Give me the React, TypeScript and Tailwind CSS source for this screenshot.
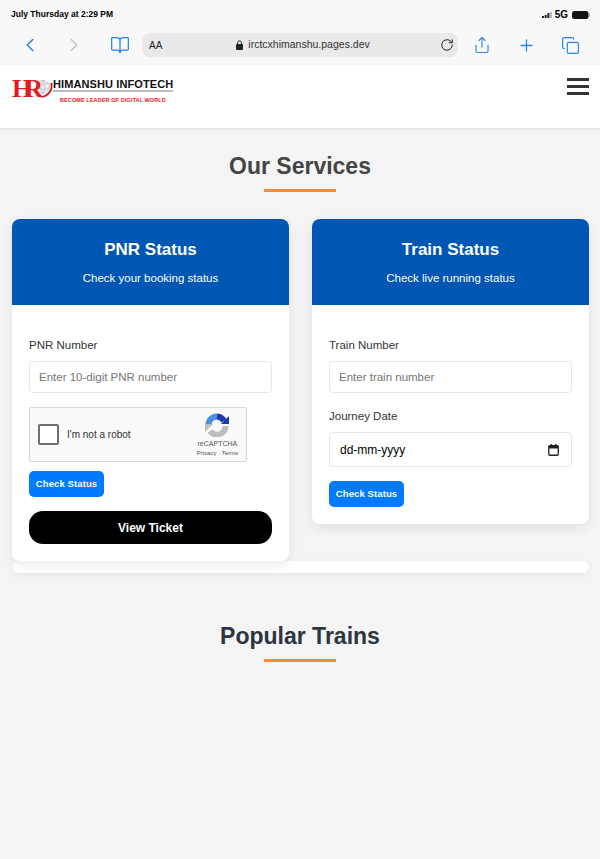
import { ChevronLeft, ChevronRight, BookOpen, RotateCw, Share, Plus, Copy } from "lucide-react"

const font = { fontFamily: '"Liberation Sans", Arial, sans-serif' }

function BrowserBar() {
  return (
    <div className="h-[65px] bg-[#f8f8f8] pl-[11px] pr-[10px] shrink-0">
      <div className="h-[29px] flex items-center justify-between">
        <span className="text-[8.5px] font-bold text-black">July Thursday at 2:29 PM</span>
        <div className="flex items-center gap-[3px]">
          <svg width="10" height="6" viewBox="0 0 10 6" fill="#222">
            <rect x="0" y="4" width="2" height="2" />
            <rect x="2.7" y="3" width="2" height="3" />
            <rect x="5.4" y="1" width="2" height="5" />
            <rect x="8" y="0" width="2" height="6" fill="#bbb" />
          </svg>
          <span className="text-[10px] font-bold text-black">5G</span>
          <svg width="18" height="8" viewBox="0 0 18 8" className="ml-[1px]">
            <rect x="0" y="0" width="16.5" height="8" rx="2.5" fill="#111" />
            <rect x="16.5" y="2.5" width="1.5" height="3" rx="0.7" fill="#999" />
          </svg>
        </div>
      </div>
      <div className="h-[26px] mt-[3px] flex items-center">
        <ChevronLeft size={22} strokeWidth={1.7} className="text-[#2a84f0] ml-[8px]" />
        <ChevronRight size={22} strokeWidth={1.7} className="text-[#c4c4c4] ml-[22px]" />
        <BookOpen size={20} strokeWidth={1.5} className="text-[#2a84f0] ml-[25px]" />
        <div className="ml-[12px] w-[316px] h-[24px] rounded-[8px] bg-[#e9e9e9] flex items-center pl-[7px] pr-[4px] text-[#222]">
          <span className="text-[10px]">AA</span>
          <svg width="7" height="10" viewBox="0 0 7 10" fill="none" className="ml-[74px]">
            <path d="M1.6 4.5 V2.8 A1.9 1.9 0 0 1 5.4 2.8 V4.5" stroke="#222" strokeWidth="1" />
            <rect x="0" y="4" width="7" height="6" rx="1" fill="#222" />
          </svg>
          <span className="text-[10.5px] ml-[5px] text-[#333] flex-1">irctcxhimanshu.pages.dev</span>
          <RotateCw size={14} strokeWidth={1.7} />
        </div>
        <Share size={18} strokeWidth={1.5} className="text-[#2a84f0] ml-[15px]" />
        <Plus size={19} strokeWidth={1.6} className="text-[#2a84f0] ml-[26px]" />
        <Copy size={19} strokeWidth={1.5} className="text-[#2a84f0] ml-[25px]" />
      </div>
    </div>
  )
}

function Logo() {
  return (
    <div className="flex items-start">
      <div className="relative w-[40px] h-[24px]">
        <svg width="22" height="22" viewBox="0 0 22 22" className="absolute left-[19px] top-[0px]" fill="none">
          <circle cx="12" cy="10" r="6.5" fill="#eee" stroke="#bdbdbd" strokeWidth="0.8" />
          <path d="M6 6 Q12 9 18 6 M5.5 11 Q12 14 18.5 11 M12 3 Q8 10 12 17 M12 3 Q16 10 12 17" stroke="#bdbdbd" strokeWidth="0.7" />
          <path d="M6 18 Q14 23 20 13 Q21 10 20.5 6" stroke="#d8141c" strokeWidth="1.8" />
        </svg>
        <span className="absolute left-[0px] top-[-1px] text-[26px] leading-[26px] font-bold text-[#e01b22] tracking-[-8px]" style={{ fontFamily: '"Liberation Serif", serif' }}>HR</span>
      </div>
      <div className="ml-[1px] pt-[1px]">
        <div className="text-[11px] leading-[12px] font-bold text-[#111] tracking-[0.1px] whitespace-nowrap">HIMANSHU INFOTECH</div>
        <div className="h-[2px] bg-[#bdbdbd] mt-[0px]" />
        <div className="text-[5.5px] leading-[8px] mt-[4px] ml-[7px] font-bold text-[#e8141c] whitespace-nowrap tracking-[0.1px]">BECOME LEADER OF DIGITAL WORLD</div>
      </div>
    </div>
  )
}

function Heading({ children, color }: { children: string; color: string }) {
  return (
    <div className="flex flex-col items-center pr-[1px]">
      <h2 className={`text-[23px] leading-[28px] font-bold ${color}`}>{children}</h2>
      <div className="w-[72px] h-[3px] bg-[#f58a3c] mt-[9px]" />
    </div>
  )
}

function CardHead({ title, sub }: { title: string; sub: string }) {
  return (
    <div className="h-[86px] bg-[#0056b3] rounded-t-[8px] text-white text-center pt-[21px]">
      <h3 className="text-[17px] leading-[20px] font-bold">{title}</h3>
      <p className="text-[11.5px] leading-[14px] mt-[11px]">{sub}</p>
    </div>
  )
}

function Field({ label, placeholder }: { label: string; placeholder: string }) {
  return (
    <div>
      <label className="block text-[11.5px] leading-[14px] text-[#333]">{label}</label>
      <input
        placeholder={placeholder}
        className="mt-[9px] w-full h-[32px] px-[9px] text-[11.5px] bg-white border border-[#e6e6e6] rounded-[4px] placeholder:text-[#757575]"
        style={font}
        readOnly
      />
    </div>
  )
}

function CheckButton() {
  return (
    <button className="block w-[75px] h-[26px] rounded-[5px] bg-[#007bff] text-white text-[9.5px] font-bold tracking-[0.1px]">
      Check Status
    </button>
  )
}

function Recaptcha() {
  return (
    <div className="w-[218px] h-[55px] mt-[14px] bg-[#f9f9f9] border border-[#d8d8d8] rounded-[2px] flex items-center pl-[8px] pr-[8px]">
      <div className="w-[21px] h-[21px] bg-white border-2 border-[#6f6f6f] rounded-[2px]" />
      <span className="text-[10px] text-[#333] ml-[8px] flex-1">I'm not a robot</span>
      <div className="flex flex-col items-center">
        <svg width="24" height="24" viewBox="0 0 24 24" fill="none" className="mt-[1px]">
          <path d="M3.5 12 A8.5 8.5 0 0 1 12 3.5" stroke="#4a90e2" strokeWidth="6" />
          <path d="M12 3.5 A8.5 8.5 0 0 1 19 8" stroke="#1c3aa9" strokeWidth="6" />
          <path d="M20.5 13 A8.5 8.5 0 0 1 5 18" stroke="#bdbdbd" strokeWidth="6" />
          <path d="M16 11 L24 11 L24 3 Z" fill="#1c3aa9" />
          <path d="M0 11 L8 11 L0 19 Z" fill="#bdbdbd" />
        </svg>
        <span className="text-[7px] leading-[9px] text-[#555] mt-[2px]">reCAPTCHA</span>
        <span className="text-[6px] leading-[8px] text-[#555] mt-[1px]">Privacy · Terms</span>
      </div>
    </div>
  )
}

function CalendarGlyph() {
  return (
    <svg width="11" height="12" viewBox="0 0 11 12" fill="none">
      <rect x="0.75" y="1.75" width="9.5" height="9.5" rx="1" stroke="#222" strokeWidth="1.3" />
      <rect x="1" y="2" width="9" height="2.5" fill="#222" />
      <rect x="2.5" y="0" width="1.3" height="2" fill="#222" />
      <rect x="7.2" y="0" width="1.3" height="2" fill="#222" />
    </svg>
  )
}

export default function App() {
  return (
    <div className="min-h-[859px] bg-[#f4f4f4] flex flex-col" style={font}>
      <BrowserBar />
      <header className="h-[63px] bg-white shadow-[0_1px_3px_rgba(0,0,0,0.1)] flex items-start justify-between pl-[12px] pr-[11px] pt-[12px]">
        <Logo />
        <div className="flex flex-col gap-[4px] w-[22px] pt-[1px]">
          <span className="h-[3px] bg-[#333]" />
          <span className="h-[3px] bg-[#333]" />
          <span className="h-[3px] bg-[#333]" />
        </div>
      </header>

      <main className="pl-[12px] pt-[24px] pr-[11px]">
        <Heading color="text-[#444]">Our Services</Heading>

        <div className="grid grid-cols-2 gap-[23px] items-start mt-[27px]">
          <section className="bg-white rounded-[8px] shadow-[0_4px_12px_rgba(0,0,0,0.08)]">
            <CardHead title="PNR Status" sub="Check your booking status" />
            <div className="px-[17px] pt-[33px] pb-[17px]">
              <Field label="PNR Number" placeholder="Enter 10-digit PNR number" />
              <Recaptcha />
              <div className="mt-[9px]"><CheckButton /></div>
              <button className="mt-[14px] block w-full h-[33px] rounded-[14px] bg-black text-white text-[12px] font-bold">View Ticket</button>
            </div>
          </section>

          <section className="bg-white rounded-[8px] shadow-[0_4px_12px_rgba(0,0,0,0.08)]">
            <CardHead title="Train Status" sub="Check live running status" />
            <div className="px-[17px] pt-[33px] pb-[17px]">
              <Field label="Train Number" placeholder="Enter train number" />
              <div className="mt-[16px]">
                <label className="block text-[11.5px] leading-[14px] text-[#333]">Journey Date</label>
                <div className="mt-[9px] h-[35px] border border-[#e6e6e6] rounded-[4px] flex items-center justify-between pl-[10px] pr-[12px] text-[12px] text-black">
                  <span>dd-mm-yyyy</span>
                  <CalendarGlyph />
                </div>
              </div>
              <div className="mt-[14px]"><CheckButton /></div>
            </div>
          </section>
        </div>

        <div className="h-[12px] bg-white rounded-[6px] shadow-[0_2px_6px_rgba(0,0,0,0.06)]" />

        <div className="mt-[49px]">
          <Heading color="text-[#2c3540]">Popular Trains</Heading>
        </div>
      </main>
    </div>
  )
}
